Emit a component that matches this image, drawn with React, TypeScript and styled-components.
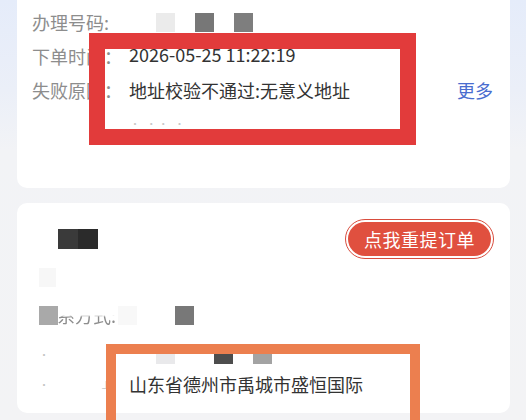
import React from "react";
import { styled, createGlobalStyle } from "styled-components";

const GlobalStyle = createGlobalStyle`
  html, body {
    margin: 0;
    padding: 0;
  }
  body {
    width: 526px;
    height: 420px;
    overflow: hidden;
    font-family: "Noto Sans CJK SC", "Noto Sans", sans-serif;
    background: linear-gradient(180deg, #e5ecfa 0px, #ebeff8 90px, #f2f3f6 150px, #f3f3f5 100%);
  }
`;

const Page = styled.div`
  position: relative;
  width: 526px;
  height: 420px;
  overflow: hidden;
`;

const Card = styled.div<{ $top?: boolean }>`
  margin: ${(p) => (p.$top ? "0 16px 0 17px" : "15px 16px 0 17px")};
  background: #ffffff;
  border-radius: ${(p) => (p.$top ? "0 0 10px 10px" : "10px")};
  box-sizing: border-box;
`;

const InfoList = styled.div`
  padding: 5px 17px 47px 15px;
`;

const Row = styled.div`
  display: flex;
  align-items: center;
  height: 34px;
  font-size: 18px;
  line-height: 34px;
`;

const Label = styled.span`
  width: 97px;
  flex-shrink: 0;
  color: #8d8d8d;
  white-space: nowrap;
  overflow: hidden;
`;

const Value = styled.span<{ $raise?: number }>`
  flex: 1;
  color: #333333;
  white-space: nowrap;
  padding-bottom: ${(p) => (p.$raise ?? 0) * 2}px;
`;

const MoreLink = styled.span`
  color: #4a6dcf;
  font-size: 18px;
`;

const MosaicRow = styled.div<{ $pad: number; $gap: number }>`
  display: flex;
  align-items: center;
  gap: ${(p) => p.$gap}px;
  padding-left: ${(p) => p.$pad}px;
`;

const Block = styled.span<{ $color: string; $w?: number; $h?: number }>`
  display: block;
  width: ${(p) => p.$w ?? 19}px;
  height: ${(p) => p.$h ?? 19}px;
  background: ${(p) => p.$color};
`;

const Residue = styled.span`
  color: #c8c8c8;
  font-size: 10px;
  letter-spacing: 2px;
  padding-left: 1px;
`;

const SecondBody = styled.div`
  padding: 16px 16px 17px 22px;
  height: 210px;
  box-sizing: border-box;
`;

const HeaderRow = styled.div`
  display: flex;
  align-items: center;
  justify-content: space-between;
  height: 40px;
`;

const ResubmitButton = styled.button`
  height: 40px;
  width: 149px;
  padding: 2px;
  border: 1.5px solid #d84c3d;
  border-radius: 20px;
  background: #ffffff;
  box-sizing: border-box;
  cursor: pointer;
  font-family: inherit;
`;

const ButtonFace = styled.span`
  display: flex;
  align-items: center;
  justify-content: center;
  height: 100%;
  border-radius: 18px;
  background: #e0503f;
  color: #ffffff;
  font-size: 18px;
  letter-spacing: 0.5px;
`;

const FadedRow = styled.div<{ $mt: number }>`
  position: relative;
  display: flex;
  align-items: center;
  height: 19px;
  margin-top: ${(p) => p.$mt}px;
`;

const ErasedText = styled.span`
  font-size: 18px;
  line-height: 19px;
  color: #8d8d8d;
  white-space: nowrap;
  -webkit-mask-image: linear-gradient(180deg, transparent 0, transparent 48%, #000 58%);
  mask-image: linear-gradient(180deg, transparent 0, transparent 48%, #000 58%);
`;

const OverBlock = styled.span<{ $left: number; $color: string }>`
  position: absolute;
  left: ${(p) => p.$left}px;
  top: 0;
  width: 19px;
  height: 19px;
  background: ${(p) => p.$color};
`;

const AddressRow = styled.div`
  display: flex;
  align-items: center;
  height: 24px;
  margin-top: 8px;
  font-size: 18px;
`;

const Dot = styled.span<{ $w: number }>`
  width: ${(p) => p.$w}px;
  flex-shrink: 0;
  color: #c4c4c4;
  font-size: 10px;
`;

const Address = styled.span`
  color: #333333;
  white-space: nowrap;
`;

const Frame = styled.div<{ $left: number; $top: number; $w: number; $h: number; $b: number; $color: string }>`
  position: absolute;
  left: ${(p) => p.$left}px;
  top: ${(p) => p.$top}px;
  width: ${(p) => p.$w}px;
  height: ${(p) => p.$h}px;
  border: ${(p) => p.$b}px solid ${(p) => p.$color};
  box-sizing: border-box;
  pointer-events: none;
`;

export default function App() {
  return (
    <Page>
      <GlobalStyle />
      <Card $top>
        <InfoList>
          <Row>
            <Label>办理号码:</Label>
            <MosaicRow $pad={27} $gap={20}>
              <Block $color="#ebebeb" />
              <Block $color="#777777" />
              <Block $color="#7e7e7e" />
            </MosaicRow>
          </Row>
          <Row>
            <Label>下单时间：</Label>
            <Value $raise={2}>2026-05-25 11:22:19</Value>
          </Row>
          <Row>
            <Label>失败原因：</Label>
            <Value>地址校验不通过:无意义地址</Value>
            <MoreLink>更多</MoreLink>
          </Row>
          <Row>
            <Label />
            <Residue>· ·· ·</Residue>
          </Row>
        </InfoList>
      </Card>

      <Card>
        <SecondBody>
          <HeaderRow>
            <MosaicRow $pad={19} $gap={0}>
              <Block $color="#3a3a3a" $w={20} $h={20} />
              <Block $color="#2b2b2b" $w={20} $h={20} />
            </MosaicRow>
            <ResubmitButton>
              <ButtonFace>点我重提订单</ButtonFace>
            </ResubmitButton>
          </HeaderRow>
          <FadedRow $mt={9}>
            <Block $color="#f7f7f7" $w={17} />
          </FadedRow>
          <FadedRow $mt={19}>
            <ErasedText>联系方式:</ErasedText>
            <OverBlock $left={0} $color="#a9a9a9" />
            <OverBlock $left={79} $color="#f8f8f8" />
            <OverBlock $left={136} $color="#787878" />
          </FadedRow>
          <FadedRow $mt={20}>
            <Dot $w={117}>·</Dot>
            <MosaicRow $pad={0} $gap={39}>
              <Block $color="#e9e9eb" />
              <Block $color="#4d4d4d" />
            </MosaicRow>
            <MosaicRow $pad={20} $gap={0}>
              <Block $color="#a3a3a3" />
            </MosaicRow>
          </FadedRow>
          <AddressRow>
            <Dot $w={62}>·</Dot>
            <Dot $w={28}>⊥</Dot>
            <Address>山东省德州市禹城市盛恒国际</Address>
          </AddressRow>
        </SecondBody>
      </Card>

      <Frame $left={89} $top={33} $w={327} $h={112} $b={16} $color="#e23b3b" />
      <Frame $left={106} $top={344} $w={314} $h={110} $b={10} $color="#ec7f4f" />
    </Page>
  );
}
